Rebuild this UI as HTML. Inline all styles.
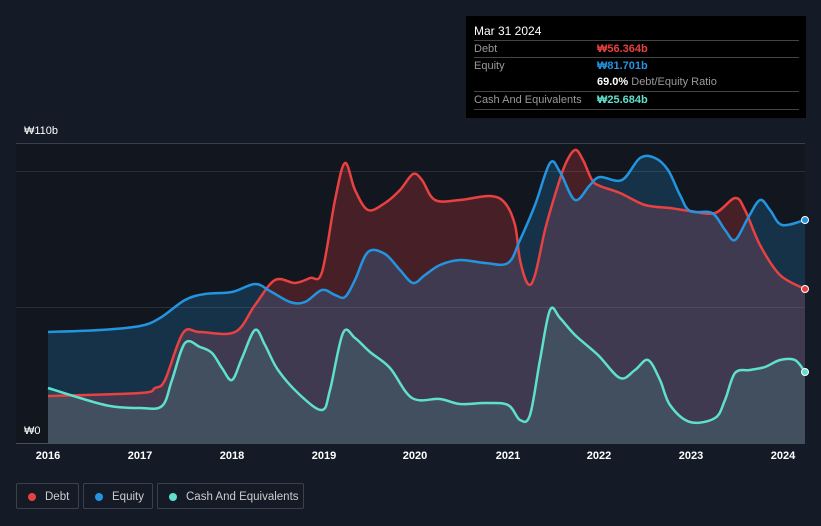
<!DOCTYPE html>
<html><head><meta charset="utf-8"><style>
body{margin:0;width:821px;height:526px;background:#151b26;font-family:"Liberation Sans","Noto Sans CJK KR",sans-serif;overflow:hidden;position:relative}
.tip{position:absolute;left:466px;top:16px;width:340px;height:102px;background:#000;color:#fff;font-size:11px}
.tip .r{position:absolute;left:8px;width:325px;border-top:1px solid #444;height:17px;line-height:17px;color:#999}
.tip .v{position:absolute;left:123px;font-weight:bold}
.leg{position:absolute;top:483px;height:26px;border:1px solid #3b414b;border-radius:2px;color:#ccc;font-size:11.5px;line-height:26px;box-sizing:border-box}
.leg i{position:absolute;left:11px;top:9px;width:8px;height:8px;border-radius:50%}
.yr{position:absolute;top:450px;color:#fff;font-size:11px;font-weight:bold;width:40px;text-align:center}
</style></head><body>
<div class="tip">
<div style="position:absolute;left:8px;top:8px;font-size:12px">Mar 31 2024</div>
<div class="r" style="top:24px">Debt<span class="v" style="color:#e84142">₩56.364b</span></div>
<div class="r" style="top:41px">Equity<span class="v" style="color:#2394e0">₩81.701b</span></div>
<div class="r" style="top:58px;border-top:none"><span class="v" style="color:#fff">69.0% <span style="font-weight:normal;color:#999">Debt/Equity Ratio</span></span></div>
<div class="r" style="top:75px">Cash And Equivalents<span class="v" style="color:#5fe0cc">₩25.684b</span></div>
<div class="r" style="top:93px;height:0"></div>
</div>
<div style="position:absolute;left:24px;top:125px;color:#fff;font-size:11px">₩110b</div>
<svg width="821" height="526" style="position:absolute;left:0;top:0" id="s">
<rect x="16" y="143" width="789" height="300" fill="#12161e"/>
<line x1="16" y1="143.5" x2="805" y2="143.5" stroke="#3a404a"/>
<line x1="16" y1="171.5" x2="805" y2="171.5" stroke="#2a303a"/>
<line x1="16" y1="307.5" x2="805" y2="307.5" stroke="#2a303a"/>
<g id="g"></g>
<line x1="16" y1="443.5" x2="805" y2="443.5" stroke="#4a505a"/>
</svg>
<div style="position:absolute;left:24px;top:425px;color:#fff;font-size:11px">₩0</div>
<div class="yr" style="left:28px">2016</div><div class="yr" style="left:120px">2017</div><div class="yr" style="left:212px">2018</div><div class="yr" style="left:304px">2019</div><div class="yr" style="left:395px">2020</div><div class="yr" style="left:488px">2021</div><div class="yr" style="left:579px">2022</div><div class="yr" style="left:671px">2023</div><div class="yr" style="left:763px">2024</div>
<div class="leg" style="left:16px;width:63px"><i style="background:#e84142"></i><span style="margin-left:28px">Debt</span></div>
<div class="leg" style="left:83px;width:70px"><i style="background:#2394e0"></i><span style="margin-left:28px">Equity</span></div>
<div class="leg" style="left:157px;width:147px"><i style="background:#5fe0cc"></i><span style="margin-left:28px">Cash And Equivalents</span></div>
<script>
var D=[[48,396],[140,393],[155,388],[165,380],[183,333],[200,332],[235,332],[255,305],[275,280],[295,283],[310,278],[322,272],[335,200],[345,163],[355,190],[368,210],[385,203],[400,190],[413,174],[422,180],[435,200],[460,200],[490,196],[505,203],[515,225],[520,260],[528,284],[535,275],[545,230],[555,195],[565,165],[575,150],[583,160],[592,180],[600,186],[620,193],[645,205],[670,208],[690,211],[715,213],[735,198],[745,210],[760,245],[780,275],[805,289]];
var E=[[48,332],[100,330],[140,326],[160,318],[185,300],[205,294],[232,292],[255,284],[270,291],[290,302],[305,302],[322,290],[335,295],[345,297],[355,280],[368,252],[385,254],[400,270],[413,283],[425,275],[440,265],[460,260],[485,263],[508,263],[520,240],[535,205],[550,163],[560,172],[575,200],[590,185],[600,177],[622,180],[640,158],[655,158],[668,170],[680,195],[690,211],[712,213],[725,230],[735,240],[748,218],[760,200],[770,210],[782,225],[805,220]];
var C=[[48,388],[80,398],[110,406],[140,408],[162,406],[172,380],[185,343],[200,347],[212,353],[222,368],[232,380],[242,358],[255,330],[265,345],[278,370],[300,395],[322,410],[330,390],[343,333],[355,338],[370,352],[390,368],[412,398],[440,399],[460,404],[485,403],[508,405],[520,420],[530,415],[540,360],[550,310],[560,318],[575,335],[598,355],[620,378],[635,370],[648,360],[660,380],[670,405],[690,422],[715,418],[725,400],[735,373],[750,370],[765,367],[780,360],[795,360],[805,372]];
function sm(p){var d="M"+p[0][0]+","+p[0][1];for(var i=0;i<p.length-1;i++){var a=p[i-1]||p[i],b=p[i],c=p[i+1],e=p[i+2]||c;d+="C"+(b[0]+(c[0]-a[0])/6)+","+(b[1]+(c[1]-a[1])/6)+" "+(c[0]-(e[0]-b[0])/6)+","+(c[1]-(e[1]-b[1])/6)+" "+c[0]+","+c[1];}return d;}
var g=document.getElementById("g"),h="";
[[D,"rgba(232,65,66,0.25)","#e84142"],[E,"rgba(35,148,224,0.22)","#2394e0"],[C,"rgba(95,224,204,0.13)","#5fe0cc"]].forEach(function(s){var d=sm(s[0]);h+='<path d="'+d+'L805,443L48,443Z" fill="'+s[1]+'"/>';});
[[D,"#e84142"],[E,"#2394e0"],[C,"#5fe0cc"]].forEach(function(s){h+='<path d="'+sm(s[0])+'" fill="none" stroke="'+s[1]+'" stroke-width="2.5"/>';var l=s[0][s[0].length-1];h+='<circle cx="'+l[0]+'" cy="'+l[1]+'" r="3.5" fill="'+s[1]+'" stroke="#fff" stroke-width="1"/>';});
g.innerHTML=h;
</script>
</body></html>
